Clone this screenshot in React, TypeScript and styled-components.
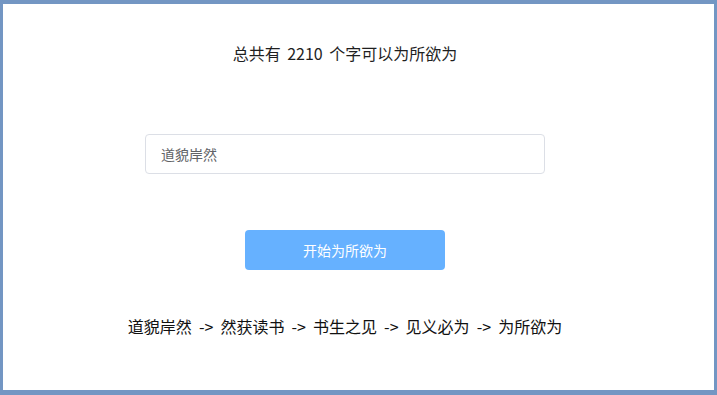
import React, { useState } from "react";
import styled, { createGlobalStyle } from "styled-components";

const GlobalStyle = createGlobalStyle`
  html, body {
    margin: 0;
    padding: 0;
    background: #7396c3;
  }
  body {
    font-family: "Microsoft YaHei", "Noto Sans CJK SC", sans-serif;
  }
`;

const Frame = styled.div`
  box-sizing: border-box;
  width: 717px;
  height: 395px;
  border-style: solid;
  border-color: #7396c3;
  border-width: 4px 3px 5px 3px;
  background: #fff;
`;

const Main = styled.div`
  width: 684px;
  display: flex;
  flex-direction: column;
  align-items: center;
`;

const Title = styled.div`
  margin-top: 38px;
  font-size: 16px;
  line-height: 22px;
  color: #1f1f1f;
  word-spacing: 3px;
`;

const Input = styled.input`
  box-sizing: border-box;
  margin-top: 70px;
  width: 400px;
  height: 40px;
  padding: 0 15px;
  border: 1px solid #dcdfe6;
  border-radius: 4px;
  font-family: inherit;
  font-size: 14px;
  color: #606266;
  outline: none;
`;

const StartButton = styled.button`
  margin-top: 56px;
  width: 200px;
  height: 40px;
  border: none;
  border-radius: 4px;
  background: #66b1ff;
  color: #fff;
  font-family: inherit;
  font-size: 14px;
  cursor: pointer;
`;

const Chain = styled.div`
  margin-top: 45px;
  font-size: 16px;
  line-height: 22px;
  color: #111;
  white-space: pre;
  word-spacing: 3.5px;
`;

const words = ["道貌岸然", "然获读书", "书生之见", "见义必为", "为所欲为"];

export default function App() {
  const [value, setValue] = useState("道貌岸然");
  return (
    <>
      <GlobalStyle />
      <Frame>
        <Main>
          <Title>总共有 2210 个字可以为所欲为</Title>
          <Input value={value} onChange={(e) => setValue(e.target.value)} />
          <StartButton>开始为所欲为</StartButton>
          <Chain>{words.join(" -> ")}</Chain>
        </Main>
      </Frame>
    </>
  );
}
